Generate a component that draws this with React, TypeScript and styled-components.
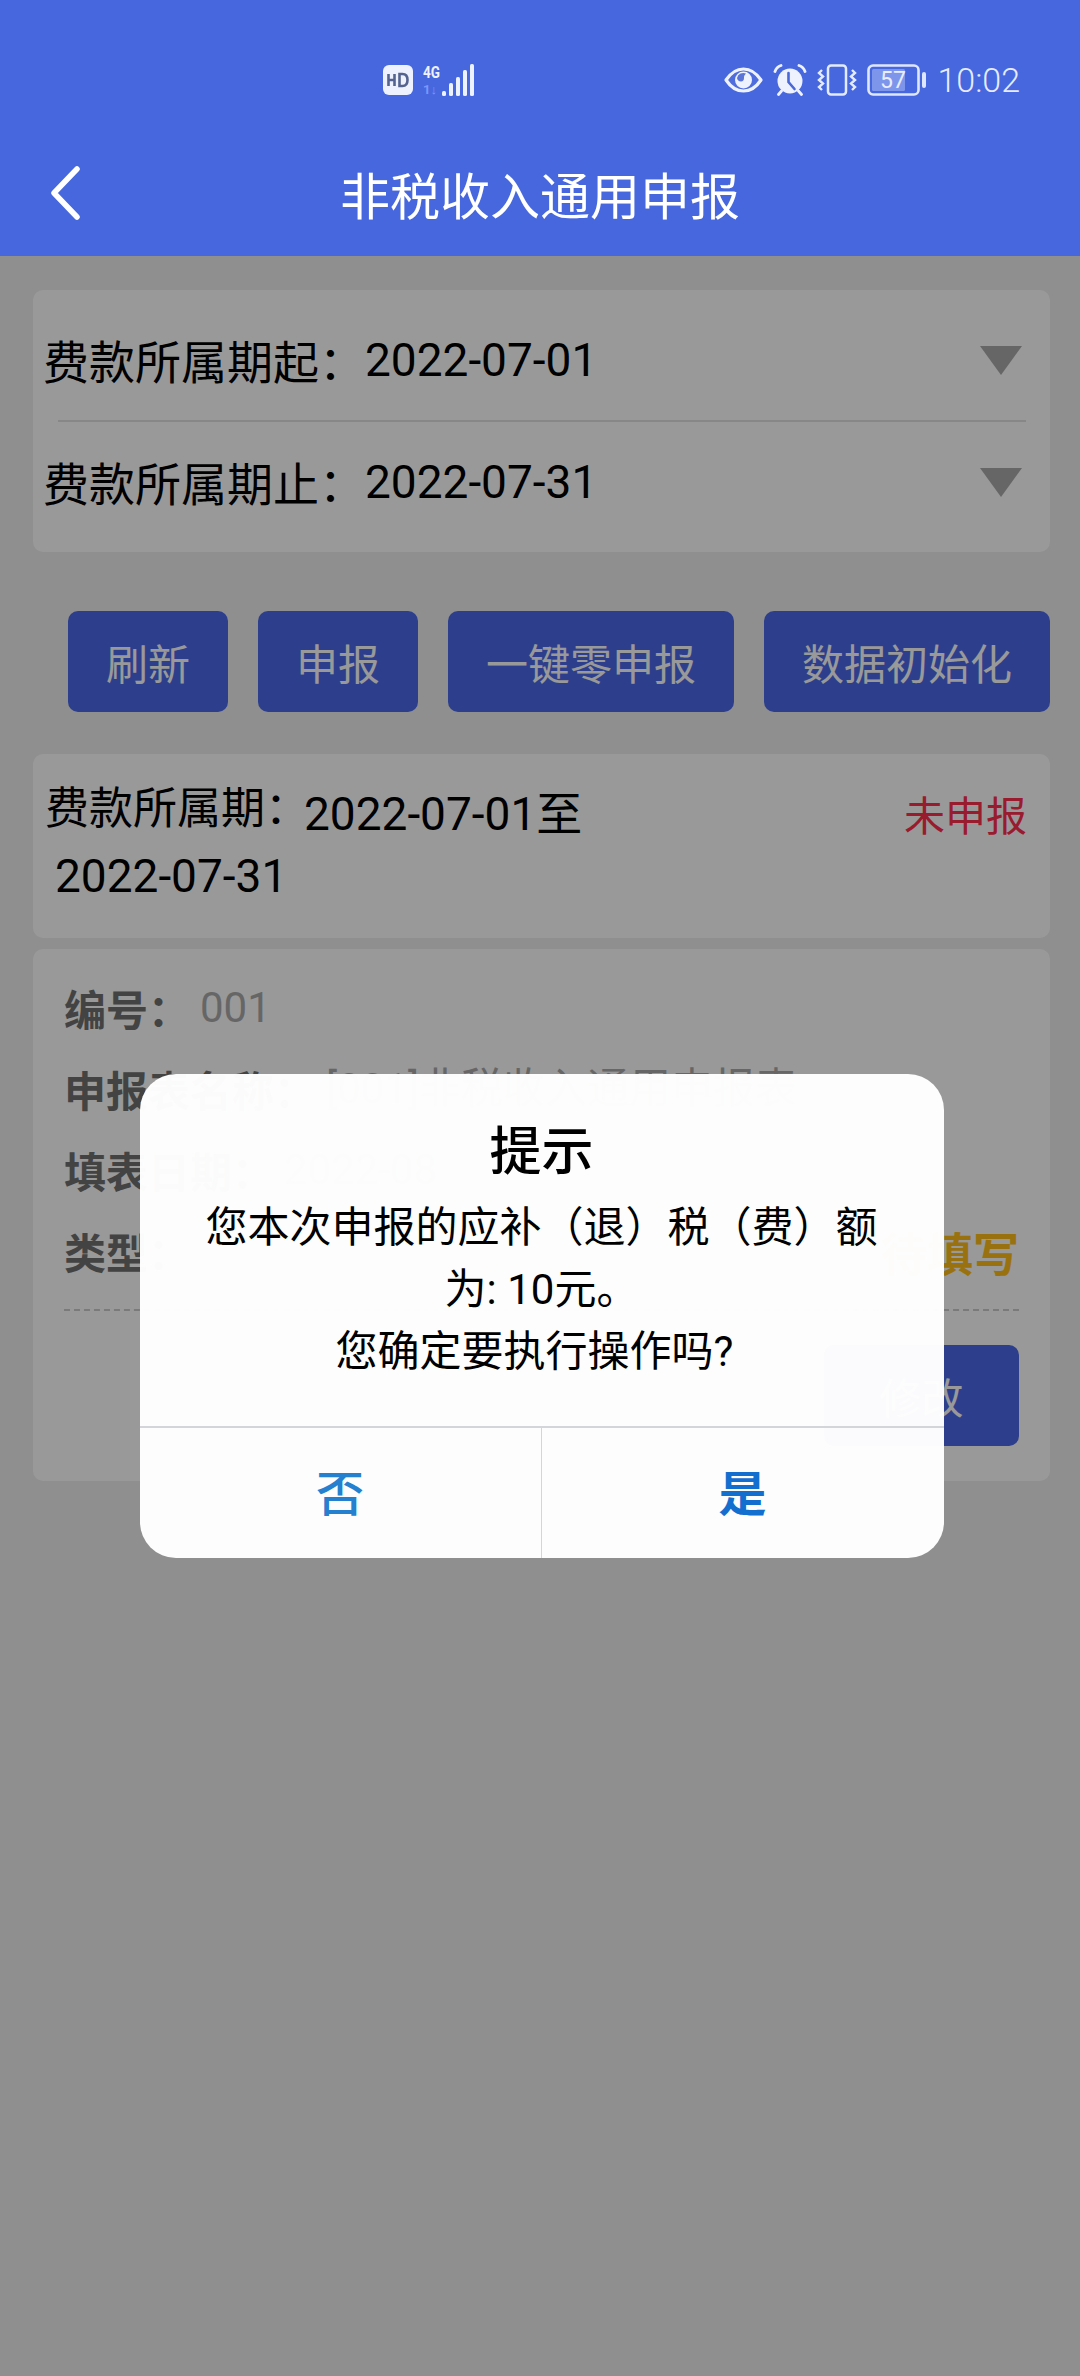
import React from "react";
import styled, { createGlobalStyle } from "styled-components";

const GlobalStyle = createGlobalStyle`
  html, body { margin: 0; padding: 0; background: #eeeef0; }
  body { font-family: Roboto, "Noto Sans CJK SC", sans-serif; }
  * { box-sizing: border-box; }
`;

const Screen = styled.div`
  width: 1080px;
  height: 2376px;
  display: flex;
  flex-direction: column;
  overflow: hidden;
`;

const Header = styled.header`
  background: #4667de;
  color: #fff;
  height: 256px;
  flex: none;
`;

const StatusBar = styled.div`
  height: 130px;
  padding: 64px 60px 34px 383px;
  display: flex;
  align-items: center;
  justify-content: space-between;
`;

const StatusGroup = styled.div`
  display: flex;
  align-items: center;
  gap: ${(p: { $gap: number }) => p.$gap}px;
`;

const Clock = styled.span`
  font: 300 34px/32px Roboto, sans-serif;
  color: #e6ecff;
`;

const NavBar = styled.div`
  height: 126px;
  display: grid;
  grid-template-columns: 1fr auto 1fr;
  align-items: center;
`;

const BackButton = styled.div`
  padding-left: 49px;
  display: flex;
  align-items: center;
`;

const Title = styled.h1`
  margin: 0;
  font: 400 50px/60px "Noto Sans CJK SC", sans-serif;
  color: #fff;
`;

const Content = styled.main`
  position: relative;
  flex: 1;
  padding: 34px 30px 0 33px;
  display: flex;
  flex-direction: column;
`;

const Card = styled.section`
  background: #fff;
  border-radius: 10px;
`;

const FilterCard = styled(Card)`
  padding: 10px 28px 10px 10px;
`;

const FilterRow = styled.div`
  height: 120px;
  display: flex;
  align-items: center;
  justify-content: space-between;
`;

const FilterText = styled.div`
  display: flex;
  align-items: center;
  color: #000;
`;

const FilterLabel = styled.span`
  margin-bottom: 3px;
  font: 400 46px/60px "Noto Sans CJK SC", sans-serif;
`;

const FilterDate = styled.span`
  font: 400 46px/60px Roboto, sans-serif;
`;

const Caret = styled.div`
  width: 0;
  height: 0;
  border-left: 21px solid transparent;
  border-right: 21px solid transparent;
  border-top: 29px solid #aaa;
`;

const FilterDivider = styled.div`
  height: 2px;
  margin: 0 -4px 0 15px;
  background: #e2e2e2;
`;

const ActionRow = styled.div`
  margin-top: 59px;
  display: flex;
  justify-content: flex-end;
  gap: 30px;
`;

const ActionButton = styled.button`
  height: 101px;
  padding: 0 38px;
  border: 0;
  border-radius: 10px;
  background: #4b69e9;
  color: #fff;
  font: 400 42px/60px "Noto Sans CJK SC", sans-serif;
`;

const PeriodCard = styled(Card)`
  margin-top: 42px;
  height: 184px;
  padding: 21px 23px 0 12px;
  display: flex;
  justify-content: space-between;
  align-items: flex-start;
  color: #000;
`;

const PeriodFirstLine = styled.div`
  display: flex;
  align-items: flex-start;
`;

const PeriodLabel = styled.span`
  font: 400 44px/60px "Noto Sans CJK SC", sans-serif;
`;

const PeriodValue = styled.span`
  margin: 9px 0 0 -5px;
  font: 400 46px/60px Roboto, "Noto Sans CJK SC", sans-serif;
`;

const PeriodEnd = styled.div`
  margin-top: 2px;
  padding-left: 10px;
  font: 400 46px/60px Roboto, sans-serif;
`;

const StatusText = styled.span`
  margin-top: 8px;
  font: 400 41px/60px "Noto Sans CJK SC", sans-serif;
  color: #ff2d4d;
`;

const RecordCard = styled(Card)`
  margin-top: 11px;
  height: 532px;
  padding: 18px 31px 0;
`;

const RecordRow = styled.div`
  height: 81px;
  display: flex;
  align-items: center;
  justify-content: space-between;
`;

const RecordField = styled.div`
  display: flex;
  align-items: center;
  gap: 10px;
`;

const RecordLabel = styled.span`
  font: 700 42px/60px "Noto Sans CJK SC", sans-serif;
  color: #717171;
`;

const RecordValue = styled.span`
  font: 400 42px/60px Roboto, "Noto Sans CJK SC", sans-serif;
  color: #aaa;
`;

const RecordState = styled.span`
  font: 700 46px/60px "Noto Sans CJK SC", sans-serif;
  color: #ffbe19;
`;

const DashedLine = styled.div`
  margin-top: 18px;
  border-top: 2px dashed #ccc;
`;

const RecordActions = styled.div`
  margin-top: 34px;
  display: flex;
  justify-content: flex-end;
`;

const EditButton = styled(ActionButton)`
  width: 195px;
  padding: 0;
`;

const Scrim = styled.div`
  position: absolute;
  inset: 0;
  padding-left: 3px;
  background: rgba(0, 0, 0, 0.4);
  display: flex;
  align-items: center;
  justify-content: center;
`;

const Dialog = styled.div`
  width: 804px;
  height: 484px;
  border-radius: 36px;
  background: rgba(255, 255, 255, 0.98);
  display: flex;
  flex-direction: column;
  overflow: hidden;
`;

const DialogBody = styled.div`
  flex: 1;
  padding: 39px 50px 0;
  text-align: center;
  color: #000;
`;

const DialogTitle = styled.h2`
  margin: 0 0 14px;
  font: 500 52px/70px "Noto Sans CJK SC", sans-serif;
`;

const DialogLine = styled.div`
  font: 400 42px/62px Roboto, "Noto Sans CJK SC", sans-serif;
`;

const DialogQuestion = styled(DialogLine)`
  padding-right: 14px;
`;

const DialogActions = styled.div`
  height: 132px;
  flex: none;
  display: grid;
  grid-template-columns: 1fr 1fr;
  border-top: 2px solid #d4d5d8;
`;

const DialogButton = styled.button<{ $strong?: boolean; $divided?: boolean }>`
  border: 0;
  padding: 0 0 6px;
  background: transparent;
  border-right: ${(p) => (p.$divided ? "1px solid #d4d5d8" : "0")};
  color: ${(p) => (p.$strong ? "#126fd0" : "#2580d0")};
  font: ${(p) => (p.$strong ? 700 : 500)} 48px/60px "Noto Sans CJK SC", sans-serif;
`;

const HdBadge = () => (
  <svg width="30" height="30" viewBox="0 0 30 30">
    <rect width="30" height="30" rx="6" fill="#eef2ff" />
    <path d="M5.500 9v12M5.500 15h6M11.500 9v12M16.500 9v12h3c3.500 0 5-2.500 5-6s-1.500-6-5-6z" fill="none" stroke="#55648f" strokeWidth="2.600" />
  </svg>
);

const Signal = () => (
  <svg width="52" height="32" viewBox="0 0 52 32">
    <text x="0" y="14" fontFamily="Roboto, sans-serif" fontSize="16" fontWeight="700" textLength="17" lengthAdjust="spacingAndGlyphs" fill="#eef2ff">4G</text>
    <text x="0" y="30" fontFamily="Roboto, sans-serif" fontSize="13" fontWeight="700" fill="#7d97ff">1↓</text>
    <g fill="#eef2ff">
      <rect x="19" y="27" width="4" height="5" rx="1.500" />
      <rect x="26" y="19" width="4" height="13" rx="1.500" />
      <rect x="33" y="13" width="4" height="19" rx="1.500" />
      <rect x="40" y="6" width="4" height="26" rx="1.500" />
      <rect x="47" y="0" width="4" height="32" rx="1.500" />
    </g>
  </svg>
);

const Eye = () => (
  <svg width="39" height="26" viewBox="0 0 39 26">
    <path d="M2 13C7 5.500 13 2 19.500 2S32 5.500 37 13c-5 7.500-11 11-17.500 11S7 20.500 2 13z" fill="#4f6ddc" stroke="#eef2ff" strokeWidth="3.200" strokeLinejoin="round" />
    <circle cx="19.500" cy="13" r="8.500" fill="#eef2ff" />
    <path d="M13 11a6.500 6.500 0 0 1 9-4.500 6 6 0 0 0-2 4.500c0 2-1 3.500-3 3.500-2.200 0-3.600-1.500-4-3.500z" fill="#5a74d8" />
  </svg>
);

const Alarm = () => (
  <svg width="34" height="32" viewBox="0 0 34 32">
    <circle cx="17" cy="17" r="12.500" fill="#eef2ff" />
    <path d="M2 7.500C3 4.500 5 2.500 8 1.500M32 7.500C31 4.500 29 2.500 26 1.500M8.500 27l-3 3.500M25.500 27l3 3.500" fill="none" stroke="#eef2ff" strokeWidth="2.800" strokeLinecap="round" />
    <path d="M15.500 9v9l6 7" fill="none" stroke="#4a68d8" strokeWidth="2.600" strokeLinecap="round" />
  </svg>
);

const Vibrate = () => (
  <svg width="40" height="32" viewBox="0 0 40 32">
    <rect x="11" y="1.500" width="18" height="29" rx="3" fill="none" stroke="#e4eaff" strokeWidth="2.500" />
    <path d="M5 6l-3 3 4 3.500-4 3.500 4 3.500-4 3.500 3 3M35 6l3 3-4 3.500 4 3.500-4 3.500 4 3.500-3 3" fill="none" stroke="#e4eaff" strokeWidth="2.400" />
  </svg>
);

const Battery = () => (
  <svg width="60" height="32" viewBox="0 0 60 32">
    <rect x="1.500" y="1.500" width="50" height="29" rx="4.500" fill="none" stroke="#dfe6ff" strokeWidth="2.600" />
    <rect x="5" y="5" width="33" height="22" rx="1.500" fill="#7d95ea" />
    <rect x="55" y="8" width="4" height="16" rx="2" fill="#dfe6ff" />
    <text x="13" y="24" fontFamily="Roboto, sans-serif" fontSize="23" fill="#e8edff">57</text>
  </svg>
);

const BackChevron = () => (
  <svg width="32" height="54" viewBox="0 0 32 54">
    <path d="M28 3L5 27l23 24" fill="none" stroke="#fff" strokeWidth="5.500" strokeLinecap="round" strokeLinejoin="round" />
  </svg>
);

export default function App() {
  return (
    <Screen>
      <GlobalStyle />
      <Header>
        <StatusBar>
          <StatusGroup $gap={10}>
            <HdBadge />
            <Signal />
          </StatusGroup>
          <StatusGroup $gap={10}>
            <Eye />
            <Alarm />
            <Vibrate />
            <Battery />
            <Clock>10:02</Clock>
          </StatusGroup>
        </StatusBar>
        <NavBar>
          <BackButton>
            <BackChevron />
          </BackButton>
          <Title>非税收入通用申报</Title>
        </NavBar>
      </Header>
      <Content>
        <FilterCard>
          <FilterRow>
            <FilterText>
              <FilterLabel>费款所属期起：</FilterLabel>
              <FilterDate>2022-07-01</FilterDate>
            </FilterText>
            <Caret />
          </FilterRow>
          <FilterDivider />
          <FilterRow>
            <FilterText>
              <FilterLabel>费款所属期止：</FilterLabel>
              <FilterDate>2022-07-31</FilterDate>
            </FilterText>
            <Caret />
          </FilterRow>
        </FilterCard>
        <ActionRow>
          <ActionButton>刷新</ActionButton>
          <ActionButton>申报</ActionButton>
          <ActionButton>一键零申报</ActionButton>
          <ActionButton>数据初始化</ActionButton>
        </ActionRow>
        <PeriodCard>
          <div>
            <PeriodFirstLine>
              <PeriodLabel>费款所属期：</PeriodLabel>
              <PeriodValue>2022-07-01至</PeriodValue>
            </PeriodFirstLine>
            <PeriodEnd>2022-07-31</PeriodEnd>
          </div>
          <StatusText>未申报</StatusText>
        </PeriodCard>
        <RecordCard>
          <RecordRow>
            <RecordField>
              <RecordLabel>编号：</RecordLabel>
              <RecordValue>001</RecordValue>
            </RecordField>
          </RecordRow>
          <RecordRow>
            <RecordField>
              <RecordLabel>申报表名称：</RecordLabel>
              <RecordValue>[001]非税收入通用申报表</RecordValue>
            </RecordField>
          </RecordRow>
          <RecordRow>
            <RecordField>
              <RecordLabel>填表日期：</RecordLabel>
              <RecordValue>2022-08</RecordValue>
            </RecordField>
          </RecordRow>
          <RecordRow>
            <RecordField>
              <RecordLabel>类型：</RecordLabel>
            </RecordField>
            <RecordState>待填写</RecordState>
          </RecordRow>
          <DashedLine />
          <RecordActions>
            <EditButton>修改</EditButton>
          </RecordActions>
        </RecordCard>
        <Scrim>
          <Dialog>
            <DialogBody>
              <DialogTitle>提示</DialogTitle>
              <DialogLine>您本次申报的应补（退）税（费）额</DialogLine>
              <DialogLine>为: 10元。</DialogLine>
              <DialogQuestion>您确定要执行操作吗?</DialogQuestion>
            </DialogBody>
            <DialogActions>
              <DialogButton $divided>否</DialogButton>
              <DialogButton $strong>是</DialogButton>
            </DialogActions>
          </Dialog>
        </Scrim>
      </Content>
    </Screen>
  );
}
